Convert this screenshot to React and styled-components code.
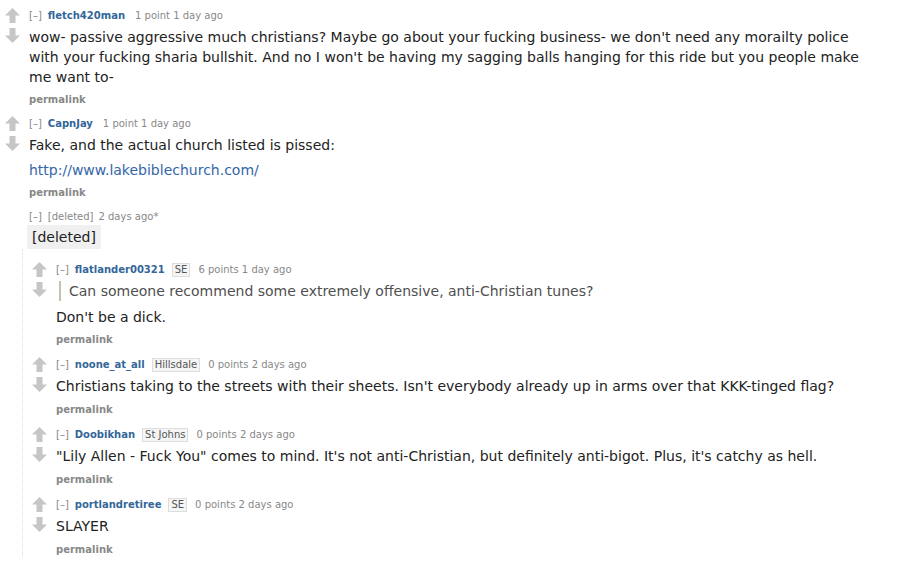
import React from "react";
import styled, { createGlobalStyle } from "styled-components";

const Global = createGlobalStyle`
  html, body { margin: 0; padding: 0; background: #fff; }
  body { font-family: "DejaVu Sans", Verdana, sans-serif; color: #222; }
`;

const Page = styled.div`
  padding: 8px 0 0 5px;
  width: 907px;
  height: 554px;
  overflow: hidden;
`;

const Block = styled.div`
  margin-bottom: ${(p) => p.$mb ?? 9}px;
`;

const Row = styled.div`
  display: flex;
  align-items: flex-start;
`;

const MidCol = styled.div`
  width: 15px;
  flex: none;
  display: flex;
  flex-direction: column;
  gap: 5px;
  margin-right: 9px;
  visibility: ${(p) => (p.$hidden ? "hidden" : "visible")};
`;

const Entry = styled.div`
  flex: 1;
  min-width: 0;
`;

const Tagline = styled.div`
  font-size: 10px;
  line-height: 16px;
  color: #888;
  white-space: nowrap;
`;

const Toggle = styled.span`
  color: #888;
  margin-right: 6px;
`;

const Author = styled.span`
  color: ${(p) => (p.$deleted ? "#888" : "#369")};
  font-weight: ${(p) => (p.$deleted ? "normal" : "bold")};
  margin-right: ${(p) => p.$gap}px;
`;

const Flair = styled.span`
  display: inline-block;
  border: 1px solid #ddd;
  background: #f5f5f5;
  color: #555;
  padding: 0 2px;
  line-height: 12px;
  margin-right: 8px;
`;

const Body = styled.div`
  font-size: 14px;
  line-height: 20px;
  color: #222;
  margin: 3px 0 ${(p) => p.$bottom}px;
  padding-right: 30px;
  p { margin: 0 0 5px; }
`;

const Quote = styled.div`
  border-left: 2px solid #c5c1ad;
  padding-left: 8px;
  margin: 0 0 6px 3px;
  color: #4f4f4f;
  p { margin: 0; }
`;

const Link = styled.a`
  color: #3366a8;
  text-decoration: none;
`;

const DeletedBox = styled.div`
  display: inline-block;
  background: #f0f0f0;
  font-size: 14px;
  line-height: 20px;
  padding: 2px 5px;
  margin: 0 0 0 -2px;
  color: #222;
`;

const Buttons = styled.div`
  font-size: 10px;
  font-weight: bold;
  color: #888;
  line-height: 14px;
`;

const Child = styled.div`
  margin-left: 17px;
  border-left: 1px dotted #ddd;
  padding-left: 9px;
  padding-top: 13px;
`;

const Arrow = ({ down }) => (
  <svg width="15" height="15" viewBox="0 0 15 15" style={{ display: "block" }}>
    <path
      d="M7.5 0 L15 7.5 L10.5 7.5 L10.5 15 L4.5 15 L4.5 7.5 L0 7.5 Z"
      fill="#c6c6c6"
      transform={down ? "rotate(180 7.5 7.5)" : undefined}
    />
  </svg>
);

const Votes = ({ hidden }) => (
  <MidCol $hidden={hidden}>
    <Arrow />
    <Arrow down />
  </MidCol>
);

const Tag = ({ author, flair, points, time, deleted }) => (
  <Tagline>
    <Toggle>[–]</Toggle>
    <Author $deleted={deleted} $gap={flair ? 7 : deleted ? 5 : 10}>
      {author}
    </Author>
    {flair && <Flair>{flair}</Flair>}
    {points && <span>{points} </span>}
    <span>{time}</span>
  </Tagline>
);

const CommentItem = ({ tag, children, mb, bodyBottom = 6 }) => (
  <Block $mb={mb}>
    <Row>
      <Votes />
      <Entry>
        <Tag {...tag} />
        <Body $bottom={bodyBottom}>{children}</Body>
        <Buttons>permalink</Buttons>
      </Entry>
    </Row>
  </Block>
);

export default function App() {
  return (
    <>
      <Global />
      <Page>
        <CommentItem tag={{ author: "fletch420man", points: "1 point", time: "1 day ago" }}>
          <p>
            wow- passive aggressive much christians? Maybe go about your fucking business- we don't need any morailty police with your fucking sharia bullshit. And no I won't be having my sagging balls hanging for this ride but you people make me want to-
          </p>
        </CommentItem>

        <CommentItem tag={{ author: "CapnJay", points: "1 point", time: "1 day ago" }}>
          <p>Fake, and the actual church listed is pissed:</p>
          <p>
            <Link href="#">http://www.lakebiblechurch.com/</Link>
          </p>
        </CommentItem>

        <Block $mb={0}>
          <Row>
            <Votes hidden />
            <Entry>
              <Tag author="[deleted]" time="2 days ago*" deleted />
              <DeletedBox>[deleted]</DeletedBox>
            </Entry>
          </Row>
          <Child>
            <CommentItem mb={10} bodyBottom={6} tag={{ author: "flatlander00321", flair: "SE", points: "6 points", time: "1 day ago" }}>
              <Quote>
                <p>Can someone recommend some extremely offensive, anti-Christian tunes?</p>
              </Quote>
              <p>Don't be a dick.</p>
            </CommentItem>
            <CommentItem mb={10} bodyBottom={7} tag={{ author: "noone_at_all", flair: "Hillsdale", points: "0 points", time: "2 days ago" }}>
              <p>Christians taking to the streets with their sheets. Isn't everybody already up in arms over that KKK-tinged flag?</p>
            </CommentItem>
            <CommentItem mb={10} bodyBottom={7} tag={{ author: "Doobikhan", flair: "St Johns", points: "0 points", time: "2 days ago" }}>
              <p>"Lily Allen - Fuck You" comes to mind. It's not anti-Christian, but definitely anti-bigot. Plus, it's catchy as hell.</p>
            </CommentItem>
            <CommentItem mb={10} bodyBottom={7} tag={{ author: "portlandretiree", flair: "SE", points: "0 points", time: "2 days ago" }}>
              <p>SLAYER</p>
            </CommentItem>
          </Child>
        </Block>
      </Page>
    </>
  );
}
